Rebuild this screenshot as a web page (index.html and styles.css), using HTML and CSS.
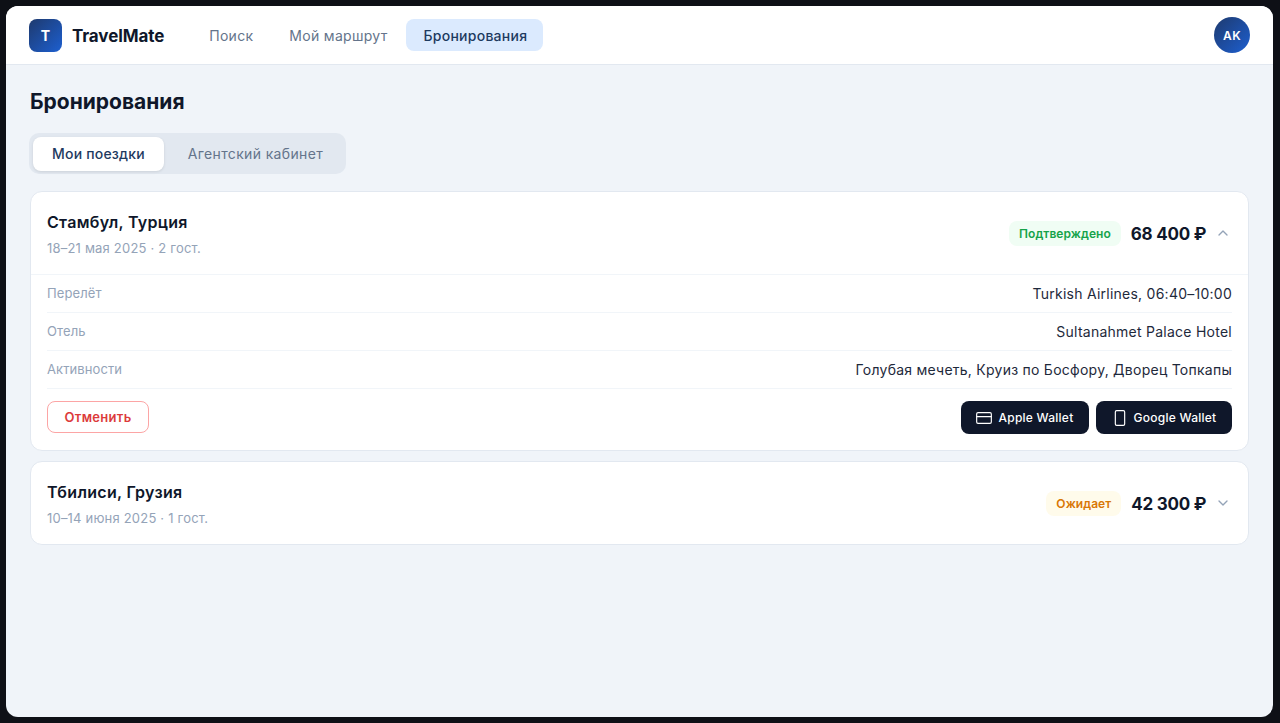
FILE: index.html
```html
<!DOCTYPE html>
<html lang="ru">
<head>
    <meta charset="UTF-8">
    <meta name="viewport" content="width=device-width, initial-scale=1.0">
    <title>TravelMate</title>
    <link rel="stylesheet" href="styles.css">
</head>
<body>
    <div class="window">
        <div class="header">
            <div class="logo-box">T</div>
            <div class="brand">TravelMate</div>
            <div class="nav">
                <a href="#" class="nav-item">Поиск</a>
                <a href="#" class="nav-item">Мой маршрут</a>
                <a href="#" class="nav-item active">Бронирования</a>
            </div>
            <div class="avatar">AK</div>
        </div>
        <div class="content">
            <div class="page-title">Бронирования</div>
            <div class="tabs">
                <button class="tab active">Мои поездки</button>
                <button class="tab">Агентский кабинет</button>
            </div>

            <div class="card">
                <div class="card-head">
                    <div class="trip">
                        <div class="trip-name">Стамбул, Турция</div>
                        <div class="trip-date">18–21 мая 2025 · 2 гост.</div>
                    </div>
                    <div class="status green">Подтверждено</div>
                    <div class="price">68 400 ₽</div>
                    <svg class="chevron" width="16" height="16" viewBox="0 0 24 24"><path d="M6 15l6-6 6 6"/></svg>
                </div>
                <div class="details">
                    <div class="row">
                        <span class="row-label">Перелёт</span>
                        <span class="row-value">Turkish Airlines, 06:40–10:00</span>
                    </div>
                    <div class="row">
                        <span class="row-label">Отель</span>
                        <span class="row-value">Sultanahmet Palace Hotel</span>
                    </div>
                    <div class="row">
                        <span class="row-label">Активности</span>
                        <span class="row-value">Голубая мечеть, Круиз по Босфору, Дворец Топкапы</span>
                    </div>
                </div>
                <div class="actions">
                    <button class="cancel-button">Отменить</button>
                    <div class="wallets">
                        <button class="wallet-button apple">
                            <svg width="16" height="16" viewBox="0 0 24 24"><rect x="1" y="4" width="22" height="16" rx="2"/><path d="M1 10h22"/></svg>
                            Apple Wallet
                        </button>
                        <button class="wallet-button google">
                            <svg width="16" height="16" viewBox="0 0 24 24"><rect x="5" y="1" width="14" height="22" rx="2"/></svg>
                            Google Wallet
                        </button>
                    </div>
                </div>
            </div>

            <div class="card">
                <div class="card-head">
                    <div class="trip">
                        <div class="trip-name">Тбилиси, Грузия</div>
                        <div class="trip-date">10–14 июня 2025 · 1 гост.</div>
                    </div>
                    <div class="status orange">Ожидает</div>
                    <div class="price">42 300 ₽</div>
                    <svg class="chevron" width="16" height="16" viewBox="0 0 24 24"><path d="M6 9l6 6 6-6"/></svg>
                </div>
            </div>
        </div>
    </div>
</body>
</html>
```

FILE: styles.css
```css
* {
    box-sizing: border-box;
}

html, body {
    height: 100%;
}

body {
    font-family: Inter, "Noto Sans", sans-serif;
    margin: 0;
    padding: 6px 7px 6px 6px;
    background-color: #0e1016;
    color: #0f172a;
    overflow: hidden;
}

.window {
    height: 100%;
    background-color: #f0f4f9;
    border-radius: 12px;
    overflow: hidden;
}

.header {
    height: 59px;
    padding: 0 23px;
    display: flex;
    align-items: center;
    background-color: #ffffff;
    border-bottom: 1px solid #e2e8f0;
}

.logo-box {
    width: 33px;
    height: 33px;
    margin-right: 10px;
    border-radius: 8px;
    background: linear-gradient(135deg, #1e3a6e, #1d5fd0);
    color: white;
    font-size: 14px;
    font-weight: 700;
    display: flex;
    align-items: center;
    justify-content: center;
}

.brand {
    margin-top: 2px;
    margin-right: 28px;
    font-size: 17px;
    font-weight: 700;
    letter-spacing: -0.1px;
}

.nav {
    display: flex;
    gap: 2px;
    flex: 1;
}

.nav-item {
    padding: 0 17px;
    height: 32px;
    line-height: 34px;
    border-radius: 8px;
    font-size: 14px;
    font-weight: 400;
    letter-spacing: 0.3px;
    color: #64748b;
    text-decoration: none;
}

.nav-item.active {
    margin-left: -1px;
    padding: 0 16px 0 18px;
    font-weight: 500;
    letter-spacing: 0.25px;
    background-color: #dbeafe;
    color: #1e3a5f;
}

.avatar {
    width: 36px;
    height: 36px;
    border-radius: 50%;
    background: linear-gradient(135deg, #1e3a6e, #1d5fd0);
    color: white;
    font-size: 12px;
    font-weight: 600;
    letter-spacing: 0.5px;
    display: flex;
    align-items: center;
    justify-content: center;
}

.content {
    padding: 23px 24px 0 23px;
}

.page-title {
    font-size: 21px;
    font-weight: 700;
    line-height: 28px;
    margin-bottom: 17px;
    margin-left: 1px;
}

.tabs {
    display: inline-flex;
    padding: 4px 4px 3px;
    margin-bottom: 17px;
    border-radius: 10px;
    background-color: #e2e8f0;
    vertical-align: top;
}

.tab {
    height: 34px;
    padding: 0 19px 2px;
    border: none;
    border-radius: 8px;
    background: none;
    font-family: inherit;
    font-size: 14px;
    font-weight: 400;
    letter-spacing: 0.35px;
    color: #64748b;
    cursor: pointer;
}

.tab + .tab {
    padding: 0 19px 2px 24px;
}

.tab.active {
    font-weight: 500;
    letter-spacing: 0.2px;
    background-color: #ffffff;
    color: #1e3a5f;
    box-shadow: 0 1px 3px rgba(0, 0, 0, 0.1);
}

.card {
    margin-left: 1px;
    margin-bottom: 10px;
    background-color: #ffffff;
    border: 1px solid #e2e8f0;
    border-radius: 12px;
}

.card-head {
    height: 82px;
    padding: 0 16px;
    display: flex;
    align-items: center;
}

.trip {
    flex: 1;
    padding-top: 2px;
}

.trip-name {
    font-size: 16px;
    font-weight: 600;
    line-height: 22px;
    letter-spacing: 0.3px;
    margin-bottom: 6px;
}

.trip-date {
    font-size: 13px;
    line-height: 18px;
    letter-spacing: 0.2px;
    color: #94a3b8;
}

.status {
    padding: 0 10px;
    height: 25px;
    line-height: 25px;
    border-radius: 8px;
    font-size: 12px;
    font-weight: 600;
    letter-spacing: 0.05px;
}

.status.green {
    background-color: #f0fdf4;
    color: #16a34a;
}

.status.orange {
    background-color: #fffbeb;
    color: #d97706;
}

.price {
    margin-top: 2px;
    margin-left: 10px;
    font-size: 17px;
    font-weight: 700;
    letter-spacing: -0.25px;
}

.chevron {
    margin-left: 9px;
    margin-right: 1px;
    fill: none;
    stroke: #94a3b8;
    stroke-width: 2;
    stroke-linecap: round;
    stroke-linejoin: round;
}

.details {
    padding: 0 16px;
    border-top: 1px solid #f1f5f9;
}

.row {
    height: 38px;
    display: flex;
    justify-content: space-between;
    align-items: center;
    border-bottom: 1px solid #f1f5f9;
}

.row-label {
    padding-bottom: 2px;
    font-size: 13px;
    letter-spacing: 0.1px;
    color: #94a3b8;
}

.row-value {
    font-size: 14px;
    font-weight: 400;
    letter-spacing: 0.25px;
    color: #1e293b;
}

.actions {
    padding: 12px 16px 16px;
    display: flex;
    justify-content: space-between;
    align-items: flex-start;
}

.wallets {
    display: flex;
    gap: 7px;
}

.cancel-button {
    width: 102px;
    height: 32px;
    border: 1px solid #fca5a5;
    border-radius: 8px;
    background-color: #ffffff;
    font-family: inherit;
    font-size: 13px;
    font-weight: 600;
    letter-spacing: 0.3px;
    color: #dc3b3b;
    cursor: pointer;
}

.wallet-button {
    height: 33px;
    padding: 0;
    display: flex;
    align-items: center;
    justify-content: center;
    gap: 6px;
    border: none;
    border-radius: 8px;
    background-color: #0f172a;
    font-family: inherit;
    font-size: 12px;
    font-weight: 500;
    letter-spacing: 0.25px;
    color: white;
    cursor: pointer;
}

.wallet-button.apple {
    width: 128px;
}

.wallet-button.google {
    width: 136px;
}

.wallet-button svg {
    fill: none;
    stroke: white;
    stroke-width: 1.75;
    stroke-linecap: round;
    stroke-linejoin: round;
}
```
